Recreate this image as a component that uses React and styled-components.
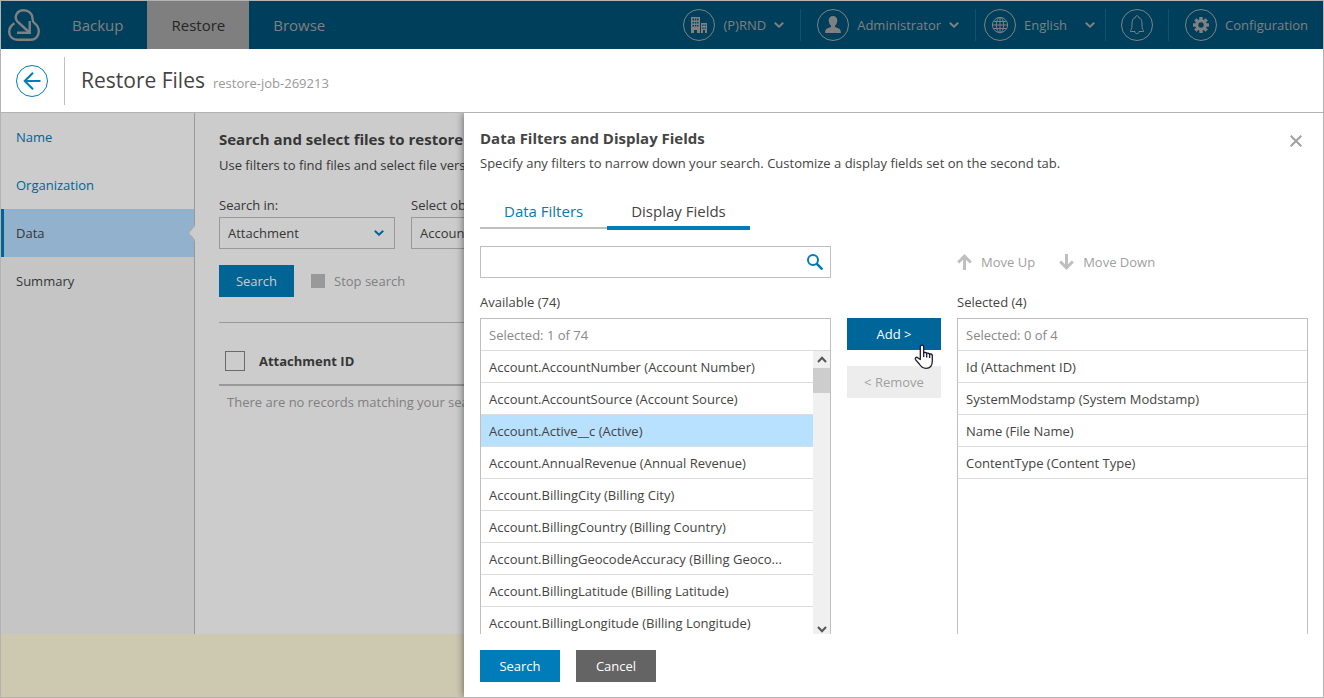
import React from 'react';
import styled, { createGlobalStyle, css } from 'styled-components';

const c = {
  blue: '#007cb8',
  darkBlue: '#006699',
  dimBlue: '#006494',
  header: '#003f5c',
  headerText: '#808080',
  text: '#444444',
  dimText: '#363636',
  dimBg: '#cccccc',
  dimBorder: '#999999',
  border: '#bfbfbf',
  frame: '#b3b3b3',
};

const Global = createGlobalStyle`
  *, *::before, *::after { box-sizing: border-box; }
  body { margin: 0; }
  body, button, input, select { font-family: "Open Sans", "Noto Sans", sans-serif; font-size: 13px; line-height: 20px; color: ${c.text}; }
  button { border: 0; padding: 0; background: none; cursor: pointer; }
  h1, h2, p, ul { margin: 0; padding: 0; font-size: inherit; font-weight: inherit; }
  ul { list-style: none; }
  a { text-decoration: none; color: inherit; }
  svg { display: block; flex: none; }
`;

const Frame = styled.div`
  display: flex;
  flex-direction: column;
  height: 100vh;
  min-height: 480px;
  border: 1px solid ${c.frame};
  background: #fff;
  overflow: hidden;
`;

/* Top bar */
const TopBar = styled.header`
  display: flex;
  justify-content: space-between;
  flex: none;
  height: 48px;
  background: ${c.header};
  color: ${c.headerText};
`;
const Nav = styled.nav`
  display: flex;
  align-items: center;
`;
const Logo = styled.a`
  padding: 0 8px 0 7px;
`;
const NavLink = styled.a`
  display: flex;
  align-items: center;
  height: 48px;
  padding: 0 24px;
  font-size: 15px;
  ${(p) => p.$active && css`background: #7f7f7f; color: #262626;`}
`;
const Tools = styled.div`
  display: flex;
  align-items: center;
  padding-right: 15px;
`;
const Tool = styled.button`
  display: flex;
  align-items: center;
  gap: 8px;
  height: 32px;
  color: inherit;
`;
const LanguageTool = styled(Tool)`
  min-width: 111px;
  > svg { margin-left: auto; }
`;
const Divider = styled.span`
  width: 1px;
  height: 32px;
  margin: 0 ${(p) => p.$after || 16}px 0 ${(p) => p.$before || 16}px;
  background: #14506c;
`;
const Circle = styled.span`
  display: flex;
  align-items: center;
  justify-content: center;
  width: 32px;
  height: 32px;
  border: 1px solid #808080;
  border-radius: 50%;
`;

/* Title bar */
const TitleBar = styled.div`
  display: flex;
  align-items: center;
  flex: none;
  height: 64px;
  padding-left: 15px;
  border-bottom: 1px solid ${c.frame};
`;
const Back = styled.button`
  width: 32px;
  height: 32px;
`;
const TitleText = styled.div`
  display: flex;
  align-items: baseline;
  gap: 8px;
  height: 48px;
  margin-left: 16px;
  padding: 7px 0 0 16px;
  border-left: 1px solid ${c.border};
`;
const Title = styled.h1`
  font-size: 21px;
  line-height: 32px;
  font-weight: 400;
`;
const JobName = styled.span`
  color: #999;
`;

/* Page behind the drawer */
const Content = styled.div`
  position: relative;
  display: flex;
  flex-direction: column;
  flex: 1;
  min-height: 0;
  overflow: hidden;
`;
const Page = styled.div`
  display: flex;
  flex: 1;
  min-height: 0;
  background: ${c.dimBg};
  color: ${c.dimText};
`;
const Steps = styled.ul`
  flex: none;
  width: 194px;
  border-right: 1px solid ${c.dimBorder};
  background: #c5c5c5;
`;
const Step = styled.li`
  position: relative;
  height: 48px;
  padding: 14px 15px;
  ${(p) => p.$state === 'done' && css`background: ${c.dimBg}; color: ${c.dimBlue};`}
  ${(p) => p.$state === 'current' && css`
    padding-left: 12px;
    border-left: 3px solid ${c.dimBlue};
    background: #92b1cc;
  `}
`;
const Notch = styled.svg`
  position: absolute;
  right: -1px;
  top: 16px;
`;
const Main = styled.main`
  flex: 1;
  min-width: 0;
  padding: 16px 24px 0;
  white-space: nowrap;
  overflow: hidden;
`;
const Heading = styled.h2`
  font-size: 15px;
  line-height: 20px;
  font-weight: 700;
`;
const DrawerHeading = styled(Heading)`
  font-size: 14px;
  line-height: 20px;
`;
const Lead = styled.p`
  margin-top: ${(p) => p.$gap || 6}px;
`;
const Fields = styled.div`
  display: flex;
  gap: 16px;
  margin-top: 20px;
`;
const Field = styled.label`
  display: flex;
  flex-direction: column;
  gap: 2px;
  width: 176px;
`;
const SelectBox = styled.span`
  display: flex;
  align-items: center;
  height: 32px;
  padding-right: 10px;
  border: 1px solid ${c.dimBorder};
`;
const Select = styled.select`
  flex: 1;
  min-width: 0;
  height: 30px;
  padding: 0 8px;
  border: 0;
  appearance: none;
  background: transparent;
  color: ${c.dimText};
`;
const ButtonRow = styled.div`
  display: flex;
  align-items: center;
  gap: ${(p) => p.$gap || 16}px;
  margin-top: 16px;
`;
const Button = styled.button`
  height: 32px;
  width: ${(p) => p.$width || 80}px;
  color: #fff;
  background: ${c.blue};
  ${(p) => p.$kind === 'dim' && css`background: ${c.dimBlue}; color: #ccc;`}
  ${(p) => p.$kind === 'hover' && css`background: ${c.darkBlue};`}
  ${(p) => p.$kind === 'gray' && css`background: #646464;`}
  ${(p) => p.$kind === 'off' && css`background: #ededed; color: #a0a0a0;`}
`;
const Stop = styled.button`
  display: flex;
  align-items: center;
  gap: 9px;
  color: #808080;
  &::before { content: ''; width: 14px; height: 14px; background: ${c.dimBorder}; }
`;
const Results = styled.table`
  width: 100%;
  margin-top: 25px;
  border-collapse: collapse;
  border-top: 1px solid ${c.dimBorder};
  th { height: 62px; padding: 16px 0 0; border-bottom: 2px solid ${c.dimBorder}; text-align: left; }
  th:first-child { width: 40px; padding-left: 6px; }
  td { padding: 6px 8px; color: #808080; }
`;
const Check = styled.input`
  display: block;
  appearance: none;
  width: 20px;
  height: 20px;
  margin: 0;
  border: 1px solid #6a6a6a;
`;
const Notice = styled.div`
  flex: none;
  height: 63px;
  background: #cdc8b0;
`;

/* Drawer */
const Drawer = styled.section`
  position: absolute;
  inset: 0 0 0 463px;
  display: flex;
  flex-direction: column;
  padding: 15px 15px 15px 16px;
  background: #fff;
  box-shadow: 0 0 8px rgba(0, 0, 0, 0.55);
`;
const DrawerHead = styled.div`
  display: flex;
  justify-content: space-between;
  align-items: flex-start;
`;
const Close = styled.button`
  padding: 7px 6px;
`;
const Tabs = styled.div`
  display: flex;
  align-items: flex-start;
  margin-top: 23px;
`;
const Tab = styled.button`
  height: ${(p) => (p.$active ? 34 : 33)}px;
  padding: 0 24px ${(p) => (p.$active ? 0 : 1)}px;
  font-size: 15px;
  color: ${c.blue};
  border-bottom: 2px solid ${c.border};
  ${(p) => p.$active && css`color: ${c.text}; border-bottom: 4px solid ${c.blue};`}
`;
const Columns = styled.div`
  display: grid;
  grid-template-columns: minmax(0, 1fr) 94px minmax(0, 1fr);
  column-gap: 16px;
  flex: 1;
  min-height: 0;
  margin-top: 16px;
`;
const Column = styled.div`
  display: flex;
  flex-direction: column;
  min-height: 0;
`;
const SearchBox = styled.div`
  display: flex;
  align-items: center;
  flex: none;
  height: 32px;
  padding-right: 7px;
  border: 1px solid ${c.border};
`;
const SearchInput = styled.input`
  flex: 1;
  min-width: 0;
  height: 30px;
  padding: 0 8px;
  border: 0;
  background: none;
`;
const MoveBar = styled.div`
  display: flex;
  align-items: center;
  gap: 24px;
  height: 32px;
`;
const Move = styled.button`
  display: flex;
  align-items: center;
  gap: 9px;
  color: #a0a0a0;
`;
const ListLabel = styled.div`
  margin: 14px 0 6px;
`;
const ListBox = styled.div`
  display: flex;
  flex-direction: column;
  flex: 1;
  min-height: 0;
  border: 1px solid ${c.border};
  border-bottom: 0;
`;
const Count = styled.div`
  flex: none;
  height: 32px;
  padding: 6px 8px;
  color: #888;
  border-bottom: 1px solid #dcdcdc;
`;
const ListBody = styled.div`
  display: flex;
  flex: 1;
  min-height: 0;
  overflow: hidden;
`;
const List = styled.ul`
  flex: 1;
  min-width: 0;
`;
const Option = styled.li`
  height: 32px;
  padding: 6px 30px 6px 8px;
  border-bottom: 1px solid #dcdcdc;
  overflow: hidden;
  text-overflow: ellipsis;
  white-space: nowrap;
  ${(p) => p.$on && css`background: #b8e0ff;`}
`;
const Scrollbar = styled.div`
  display: flex;
  flex-direction: column;
  align-items: center;
  flex: none;
  width: 17px;
  background: #f0f0f0;
  padding: 5px 0 1px;
  svg:last-child { margin-top: auto; }
`;
const Thumb = styled.span`
  width: 17px;
  height: 25px;
  margin-top: 5px;
  background: #cdcdcd;
`;
const Transfer = styled.div`
  position: relative;
  display: flex;
  flex-direction: column;
  gap: 16px;
  padding-top: 72px;
`;
const Pointer = styled.svg`
  position: absolute;
  left: 67px;
  top: 98px;
`;

const Chevron = ({ color = '#808080', width = 2 }) => (
  <svg width="10" height="6" viewBox="0 0 10 6" fill="none" stroke={color} strokeWidth={width}>
    <path d="M.8.8 5 4.7 9.2.8" />
  </svg>
);
const ScrollArrow = ({ up }) => (
  <svg width="10" height="7" viewBox="0 0 10 7" fill="none" stroke="#555" strokeWidth="2">
    <path d={up ? 'M1 6l4-4.3L9 6' : 'M1 1l4 4.3L9 1'} />
  </svg>
);
const LogoIcon = () => (
  <svg width="32" height="32" viewBox="0 0 32 32" fill="none" stroke="#808080" strokeWidth="2.4">
    <path d="M22 24 9.300 12.300C5.800 8.200 8.600 1.200 15.800 1.200c5 0 8.700 3.800 8.700 8.300 0 2 .3 3.200 2 4.600 2.700 2.100 4.300 4.900 4.300 8.400 0 5-3.800 8.300-8.300 8.300h-13c-5 0-8.300-3.500-8.300-7.800 0-4 1.800-6.600 5.300-8.800" />
    <path d="M21.700 12V23.700H9" />
  </svg>
);
const Building = () => (
  <svg width="17" height="16" viewBox="0 0 17 16">
    <path fill="#808080" fillRule="evenodd" d="M0 0h9v16H6v-3H3v3H0zM1.500 1.500v2H3v-2zm2.300 0v2h1.500v-2zm2.300 0v2h1.400v-2zM1.500 5v1.500H3V5zm2.300 0v1.500h1.500V5zm2.300 0v1.500h1.400V5zM1.500 8v1.500H3V8zm2.300 0v1.500h1.500V8zm2.300 0v1.500h1.400V8zM10 6h6v10h-2v-3h-2v3h-2zm1.300 1.500V9h1.200V7.500zm2.300 0V9h1.200V7.500zm-2.300 3V12h1.200v-1.500zm2.300 0V12h1.200v-1.500z" />
  </svg>
);
const Person = () => (
  <svg width="16" height="18" viewBox="0 0 16 18" fill="#808080">
    <path d="M8 0c2.700 0 4.300 2 4.300 4.500 0 2-1 4.200-2.300 5.200v1.300c1.700.6 3.600 1.200 4.600 2 1 .9 1.200 2 1.200 4H.2c0-2 .2-3.100 1.200-4 1-.8 2.900-1.400 4.600-2V9.700C4.700 8.700 3.700 6.500 3.700 4.500 3.700 2 5.300 0 8 0z" />
  </svg>
);
const Globe = () => (
  <svg width="18" height="18" viewBox="0 0 18 18" fill="none" stroke="#808080">
    <circle cx="9" cy="9" r="7.600" />
    <ellipse cx="9" cy="9" rx="3.700" ry="7.600" />
    <path d="M9 1.400v15.200M2.500 5.500h13M1.400 9h15.200M2.500 12.500h13" />
  </svg>
);
const Bell = () => (
  <svg width="18" height="20" viewBox="0 0 18 20" fill="none" stroke="#808080">
    <path d="M7 16.500H2.500v-1C4 14 4 12 4 9c0-3.500 1-6 3.500-6.500C7.500 1 8 .8 9 .8s1.500.2 1.500 1.700C13 3 14 5.500 14 9c0 3 0 5 1.500 6.500v1H11c0 1.500-.8 2.200-2 2.200s-2-.7-2-2.200z" />
  </svg>
);
const Gear = () => (
  <svg width="16" height="16" viewBox="-8 -8 16 16">
    <g fill="#808080">
      {[0, 45, 90, 135].map((a) => (
        <rect key={a} x="-1.700" y="-8" width="3.400" height="16" transform={`rotate(${a})`} />
      ))}
      <circle r="5.800" />
    </g>
    <circle r="2.700" fill={c.header} />
  </svg>
);
const MoveArrow = ({ down }) => (
  <svg width="15" height="16" viewBox="0 0 15 16" fill="none" stroke="#bfbfbf" strokeWidth="3">
    <path d={down ? 'M7.500 0v14M1.200 7.500l6.300 6.300 6.300-6.300' : 'M7.500 16V2M1.200 8.500l6.300-6.300 6.300 6.300'} />
  </svg>
);

const available = [
  'Account.AccountNumber (Account Number)',
  'Account.AccountSource (Account Source)',
  'Account.Active__c (Active)',
  'Account.AnnualRevenue (Annual Revenue)',
  'Account.BillingCity (Billing City)',
  'Account.BillingCountry (Billing Country)',
  'Account.BillingGeocodeAccuracy (Billing Geoco...',
  'Account.BillingLatitude (Billing Latitude)',
  'Account.BillingLongitude (Billing Longitude)',
];
const selected = [
  'Id (Attachment ID)',
  'SystemModstamp (System Modstamp)',
  'Name (File Name)',
  'ContentType (Content Type)',
];

function SelectField({ label, value }) {
  return (
    <Field>
      {label}
      <SelectBox>
        <Select defaultValue={value}>
          <option>{value}</option>
        </Select>
        <Chevron color={c.dimBlue} />
      </SelectBox>
    </Field>
  );
}

function FieldsDrawer() {
  return (
    <Drawer role="dialog" aria-label="Data Filters and Display Fields">
      <DrawerHead>
        <div>
          <Heading>Data Filters and Display Fields</Heading>
          <Lead $gap={5}>Specify any filters to narrow down your search. Customize a display fields set on the second tab.</Lead>
        </div>
        <Close aria-label="Close">
          <svg width="12" height="12" viewBox="0 0 12 12" stroke="#a0a0a0" strokeWidth="2">
            <path d="M.7.7l10.600 10.600M11.300.7.7 11.300" />
          </svg>
        </Close>
      </DrawerHead>
      <Tabs role="tablist">
        <Tab role="tab">Data Filters</Tab>
        <Tab role="tab" aria-selected="true" $active>Display Fields</Tab>
      </Tabs>
      <Columns>
        <Column>
          <SearchBox>
            <SearchInput type="text" aria-label="Search fields" />
            <svg width="16" height="16" viewBox="0 0 16 16" fill="none" stroke={c.blue} strokeWidth="2">
              <circle cx="6" cy="6" r="5" />
              <path d="M9.500 9.500l6 6" strokeWidth="2.500" />
            </svg>
          </SearchBox>
          <ListLabel>Available (74)</ListLabel>
          <ListBox>
            <Count>Selected: 1 of 74</Count>
            <ListBody>
              <List role="listbox" aria-label="Available">
                {available.map((name, i) => (
                  <Option key={name} role="option" aria-selected={i === 2} $on={i === 2}>{name}</Option>
                ))}
              </List>
              <Scrollbar>
                <ScrollArrow up />
                <Thumb />
                <ScrollArrow />
              </Scrollbar>
            </ListBody>
          </ListBox>
        </Column>
        <Transfer>
          <Button $width={94} $kind="hover">Add &gt;</Button>
          <Button $width={94} $kind="off" disabled>&lt; Remove</Button>
          <Pointer width="20" height="26" viewBox="0 0 20 26" fill="#fff" stroke="#1c1c2e" strokeWidth="1.300" strokeLinejoin="round">
            <path d="M6.300 15.500V3.200C6.300 1.800 7 1.200 8 1.200s1.700.6 1.700 2V9c0-.9 3-.9 3 .6 0-.9 2.900-.7 2.900.8 0-.9 2.700-.6 2.700 1V17c0 4-2 7.300-6.300 7.300-3.500 0-5.200-1.800-6.700-4.300L1.500 15.600c-.8-1.500.6-3 2.200-1.900z" />
            <path d="M9.700 8.500V13M12.700 9.500V13.500M15.600 10.500V14" />
          </Pointer>
        </Transfer>
        <Column>
          <MoveBar>
            <Move><MoveArrow />Move Up</Move>
            <Move><MoveArrow down />Move Down</Move>
          </MoveBar>
          <ListLabel>Selected (4)</ListLabel>
          <ListBox>
            <Count>Selected: 0 of 4</Count>
            <List role="listbox" aria-label="Selected">
              {selected.map((name) => (
                <Option key={name} role="option">{name}</Option>
              ))}
            </List>
          </ListBox>
        </Column>
      </Columns>
      <ButtonRow>
        <Button>Search</Button>
        <Button $kind="gray">Cancel</Button>
      </ButtonRow>
    </Drawer>
  );
}

export default function App() {
  return (
    <Frame>
      <Global />
      <TopBar>
        <Nav>
          <Logo href="#" aria-label="Home"><LogoIcon /></Logo>
          <NavLink href="#backup">Backup</NavLink>
          <NavLink href="#restore" $active>Restore</NavLink>
          <NavLink href="#browse">Browse</NavLink>
        </Nav>
        <Tools>
          <Tool><Circle><Building /></Circle>(P)RND<Chevron /></Tool>
          <Divider />
          <Tool><Circle><Person /></Circle>Administrator<Chevron /></Tool>
          <Divider $after={8} />
          <LanguageTool><Circle><Globe /></Circle>English<Chevron /></LanguageTool>
          <Divider $before={10} $after={15} />
          <Tool aria-label="Notifications"><Circle><Bell /></Circle></Tool>
          <Divider $before={15} />
          <Tool><Circle><Gear /></Circle>Configuration</Tool>
        </Tools>
      </TopBar>
      <TitleBar>
        <Back aria-label="Back">
          <svg width="32" height="32" viewBox="0 0 32 32" fill="none" stroke={c.blue}>
            <circle cx="16" cy="16" r="15.500" />
            <path d="M24.500 16H9M17 7.700 8.700 16l8.300 8.300" strokeWidth="2" />
          </svg>
        </Back>
        <TitleText>
          <Title>Restore Files</Title>
          <JobName>restore-job-269213</JobName>
        </TitleText>
      </TitleBar>
      <Content>
        <Page>
          <Steps>
            <Step $state="done"><a href="#name">Name</a></Step>
            <Step $state="done"><a href="#organization">Organization</a></Step>
            <Step $state="current">
              Data
              <Notch width="7" height="16" viewBox="0 0 7 16">
                <path d="M7 0 .5 8 7 16z" fill={c.dimBg} />
                <path d="M7 .5.700 8 7 15.500" fill="none" stroke="#a6a6a6" />
              </Notch>
            </Step>
            <Step>Summary</Step>
          </Steps>
          <Main>
            <Heading>Search and select files to restore</Heading>
            <Lead>Use filters to find files and select file versions</Lead>
            <Fields>
              <SelectField label="Search in:" value="Attachment" />
              <SelectField label="Select object:" value="Account" />
            </Fields>
            <ButtonRow $gap={17}>
              <Button $width={75} $kind="dim">Search</Button>
              <Stop>Stop search</Stop>
            </ButtonRow>
            <Results>
              <thead>
                <tr>
                  <th><Check type="checkbox" aria-label="Select all" /></th>
                  <th>Attachment ID</th>
                </tr>
              </thead>
              <tbody>
                <tr><td colSpan="2">There are no records matching your search</td></tr>
              </tbody>
            </Results>
          </Main>
        </Page>
        <Notice />
        <FieldsDrawer />
      </Content>
    </Frame>
  );
}
